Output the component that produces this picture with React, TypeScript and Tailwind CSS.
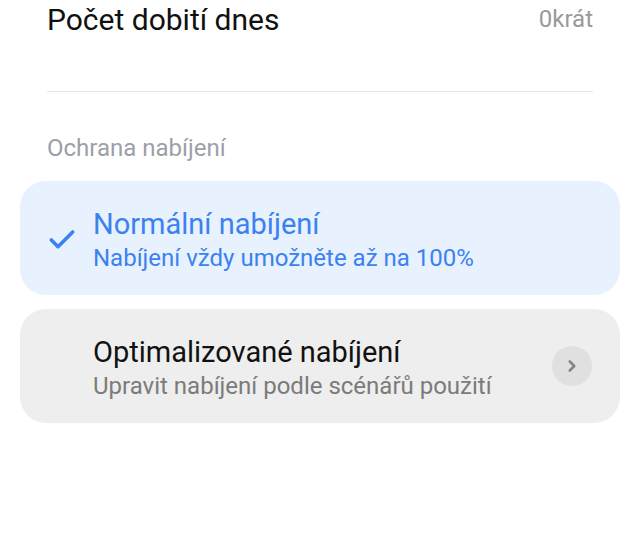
import { Check, ChevronRight } from 'lucide-react'

const font = { fontFamily: 'Roboto, "Noto Sans", sans-serif' }

function OptionCard({
  title,
  subtitle,
  selected,
  arrow,
}: {
  title: string
  subtitle: string
  selected?: boolean
  arrow?: boolean
}) {
  return (
    <div
      className={`flex items-center h-[114px] rounded-[26px] pl-[26px] pr-[28px] ${
        selected ? 'bg-[#e8f1fe]' : 'bg-[#eeeeee]'
      }`}
    >
      <div className="w-[47px] shrink-0 flex items-center">
        {selected && <Check className="w-[32px] h-[32px] text-[#3b82f0] mt-[3px]" strokeWidth={2.7} />}
      </div>
      <div className="flex flex-col flex-1 gap-[3px] pt-[2px]">
        <span className={`text-[29px] leading-[34px] ${selected ? 'text-[#3b82f0]' : 'text-[#111111]'}`}>{title}</span>
        <span className={`text-[24px] leading-[28px] ${selected ? 'text-[#3b82f0]' : 'text-[#7b7b7b]'}`}>{subtitle}</span>
      </div>
      {arrow && (
        <div className="w-[40px] h-[40px] rounded-full bg-[#e0e0e0] flex items-center justify-center">
          <ChevronRight className="w-[18px] h-[18px] text-[#858585]" strokeWidth={3.5} />
        </div>
      )}
    </div>
  )
}

export default function App() {
  return (
    <div className="w-[640px] h-[560px] bg-white overflow-hidden" style={font}>
      <div className="px-[47px]">
        <div className="flex items-center justify-between h-[38px]">
          <span className="text-[30px] text-[#111111]">Počet dobití dnes</span>
          <span className="text-[24px] text-[#9a9a9a]">0krát</span>
        </div>
        <div className="mt-[53px] h-px bg-[#e6e6e6]" />
        <div className="mt-[42px] text-[24px] leading-[28px] text-[#9aa0a8]">Ochrana nabíjení</div>
      </div>
      <div className="px-[20px] mt-[19px] flex flex-col gap-[14px]">
        <OptionCard title="Normální nabíjení" subtitle="Nabíjení vždy umožněte až na 100%" selected />
        <OptionCard title="Optimalizované nabíjení" subtitle="Upravit nabíjení podle scénářů použití" arrow />
      </div>
    </div>
  )
}
